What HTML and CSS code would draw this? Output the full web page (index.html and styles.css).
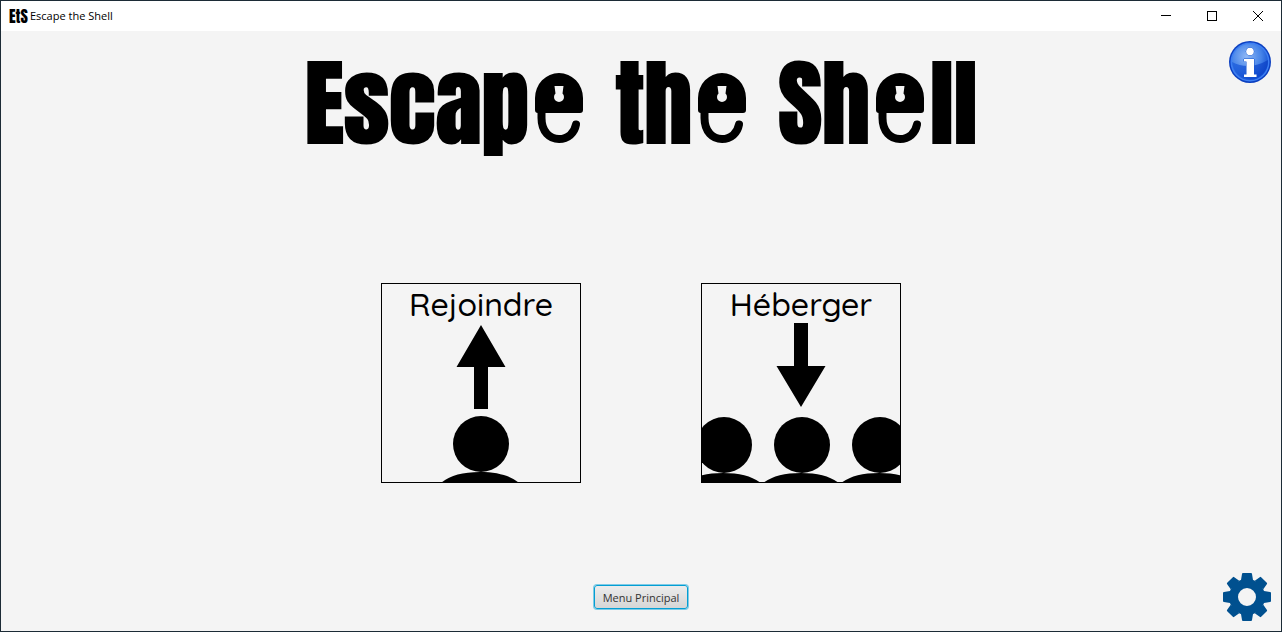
FILE: index.html
```html
<!DOCTYPE html>
<html lang="fr">
<head>
<meta charset="utf-8">
<title>Escape the Shell</title>
<link rel="stylesheet" href="styles.css">
</head>
<body>
<svg class="defs" aria-hidden="true">
  <defs>
    <symbol id="padlock" viewBox="0 0 48 70">
      <path d="M6.500 37V45C6.500 59 15 66 24 66C33 66 39.500 60 41 51.500" fill="none" stroke="#000" stroke-width="8" stroke-linecap="round"/>
      <path fill-rule="evenodd" d="M0 25A24 25 0 0 1 48 25V37Q48 40 45 40H3Q0 40 0 37ZM19.500 13L20.500 20.500A5 5 0 1 0 27.500 20.500L28.500 13Z"/>
    </symbol>
    <symbol id="person" viewBox="0 0 80 67">
      <circle cx="40" cy="28" r="28"/>
      <path d="M0 67C8 60 21 56 39 56S70 60 78 67Z"/>
    </symbol>
  </defs>
</svg>
<div class="window">
  <header class="titlebar">
    <span class="app-icon" aria-hidden="true">EtS</span>
    <span class="app-name">Escape the Shell</span>
    <button class="win-btn" aria-label="Réduire"><svg width="10" height="10"><path d="M0 4.500H10" stroke="#000"/></svg></button>
    <button class="win-btn" aria-label="Agrandir"><svg width="10" height="10"><rect x=".5" y=".5" width="9" height="9" fill="none" stroke="#000"/></svg></button>
    <button class="win-btn" aria-label="Fermer"><svg width="10" height="10"><path d="M0 0L10 10M10 0L0 10" stroke="#000"/></svg></button>
  </header>
  <main class="screen">
    <div class="top">
      <h1 class="logo" aria-label="Escape the Shell">
        <span class="word">Escap<svg class="lock"><use href="#padlock"/></svg></span>
        <span class="word">th<svg class="lock"><use href="#padlock"/></svg></span>
        <span class="word">Sh<svg class="lock"><use href="#padlock"/></svg>ll</span>
      </h1>
      <button class="icon-btn info" aria-label="Informations">
        <svg width="42" height="42" viewBox="0 0 42 42">
          <defs>
            <radialGradient id="ball" cx=".4" cy=".35" r=".7">
              <stop offset="0" stop-color="#8fb8f5"/><stop offset=".6" stop-color="#4583e8"/><stop offset="1" stop-color="#0c48cf"/>
            </radialGradient>
            <linearGradient id="shade" x1="0" y1="0" x2="1" y2="0">
              <stop offset="0" stop-color="#1a5bdd"/><stop offset=".55" stop-color="#0b45cc"/><stop offset="1" stop-color="#0a3fc4"/>
            </linearGradient>
          </defs>
          <circle cx="21" cy="21" r="21" fill="#0b3fc0"/>
          <circle cx="21" cy="21" r="19.500" fill="#3d7ff2"/>
          <circle cx="21" cy="21" r="18" fill="url(#ball)"/>
          <path d="M3 21Q20 30 39 19A18 18 0 0 1 3 21Z" fill="url(#shade)" opacity=".7"/>
          <g fill="#fff" stroke="#1455d0" stroke-width="1" paint-order="stroke">
            <circle cx="21" cy="10.500" r="3.800"/>
            <path d="M15 18H25V33.500H27.500V36H15V33.500H17.500V20.500H15Z"/>
          </g>
        </svg>
      </button>
    </div>
    <div class="choices">
      <button class="card">
        <span class="card-label">Rejoindre</span>
        <svg class="art" viewBox="0 0 198 198">
          <path d="M99 41L123.500 83H106V125H92V83H74.500Z"/>
          <use href="#person" x="59" y="132" width="80" height="67"/>
        </svg>
      </button>
      <button class="card">
        <span class="card-label">Héberger</span>
        <svg class="art" viewBox="0 0 198 198">
          <path d="M92 39H106V82H123.500L99 123L74.500 82H92Z"/>
          <use href="#person" x="-18" y="133" width="80" height="67"/>
          <use href="#person" x="60" y="133" width="80" height="67"/>
          <use href="#person" x="138" y="133" width="80" height="67"/>
        </svg>
      </button>
    </div>
    <div class="bottom">
      <button class="menu-btn">Menu Principal</button>
      <button class="icon-btn gear" aria-label="Paramètres">
        <svg width="48" height="48" viewBox="-24 -24 48 48" fill="#00508f">
          <circle r="13.500" fill="none" stroke="#00508f" stroke-width="9"/>
          <g id="teeth"><path d="M-6-17L-5-23Q-5-24-4-24H4Q5-24 5-23L6-17ZM-6 17L-5 23Q-5 24-4 24H4Q5 24 5 23L6 17Z"/></g>
          <use href="#teeth" transform="rotate(45)"/>
          <use href="#teeth" transform="rotate(90)"/>
          <use href="#teeth" transform="rotate(135)"/>
        </svg>
      </button>
    </div>
  </main>
</div>
</body>
</html>
```
FILE: styles.css
```css
* { box-sizing: border-box; }

body {
  margin: 0;
  font-family: "Open Sans", "Noto Sans", sans-serif;
  font-size: 11px;
  color: #000;
}

button {
  font: inherit;
  color: inherit;
  padding: 0;
  border: 0;
  background: none;
}

svg { display: block; }

.defs {
  position: absolute;
  width: 0;
  height: 0;
}

.window {
  display: flex;
  flex-direction: column;
  min-height: 100vh;
  border: 1px solid #1c2b36;
  background: #f4f4f4;
}

.titlebar {
  display: flex;
  align-items: center;
  height: 30px;
  padding-left: 8px;
  background: #fff;
}

.app-icon {
  width: 21px;
  font-family: Anton, "Roboto Condensed", sans-serif;
  font-size: 16px;
  line-height: 28px;
}

.app-name {
  flex: 1;
  padding-bottom: 2px;
}

.win-btn {
  display: grid;
  place-items: center;
  width: 46px;
  height: 30px;
}

.screen {
  flex: 1;
  display: flex;
  flex-direction: column;
  justify-content: space-between;
  padding: 10px;
}

.top,
.bottom {
  display: grid;
  grid-template-columns: 1fr auto 1fr;
}

.logo {
  grid-column: 2;
  display: flex;
  gap: 32px;
  margin: 10px 0 38px;
  font-family: Anton, "Roboto Condensed", sans-serif;
  font-size: 95px;
  font-weight: 400;
  line-height: 104px;
  -webkit-text-stroke: 2px #000;
}

.word { white-space: nowrap; }

.lock {
  display: inline-block;
  width: 48px;
  height: 70px;
  margin: 0 6px;
  vertical-align: baseline;
}

.word:not(:last-child) .lock { margin-right: 0; }

.icon-btn {
  grid-column: 3;
  justify-self: end;
  align-self: start;
}

.choices {
  display: flex;
  justify-content: center;
  gap: 120px;
}

.card {
  display: grid;
  width: 200px;
  height: 200px;
  border: 1px solid #000;
  overflow: hidden;
}

.card-label,
.art {
  grid-area: 1 / 1;
}

.card-label {
  font-family: Quicksand, Nunito, Lato, sans-serif;
  font-size: 32px;
  font-weight: 500;
  line-height: 40px;
}

.art {
  width: 100%;
  height: 100%;
}

.bottom { align-items: center; }

.menu-btn {
  grid-column: 2;
  height: 24px;
  padding: 0 8px;
  border: 1px solid #039ed3;
  border-radius: 3px;
  box-shadow: 0 0 0 1px #7fcbe6;
  background: linear-gradient(#ececec, #d6d6d6);
  color: #333;
}
```
